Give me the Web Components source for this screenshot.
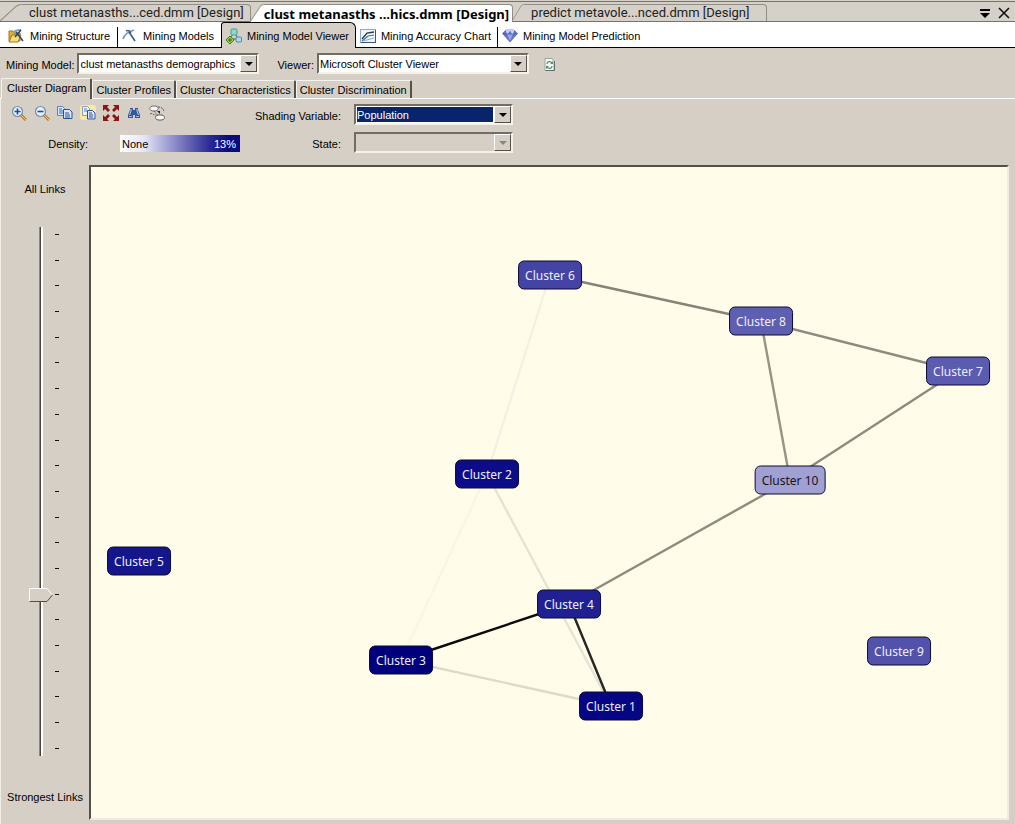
<!DOCTYPE html>
<html lang="en">
<head>
<meta charset="utf-8">
<title>clust metanasths demographics.dmm [Design]</title>
<style>
  html, body { margin: 0; height: 100%; }
  body {
    font: 11px/14px Tahoma, "Liberation Sans", sans-serif;
    color: #000;
    background: #d6cfc6;
  }
</style>
</head>
<body>
<mining-designer></mining-designer>

<script>
function define(name, html, setup) {
  const template = document.createElement('template');
  template.innerHTML = html;
  customElements.define(name, class extends HTMLElement {
    connectedCallback() {
      if (this.shadowRoot) return;
      const content = template.content.cloneNode(true);
      if (setup) setup.call(this, content);
      this.attachShadow({ mode: 'open' }).append(content);
    }
  });
}

/* ---------- icons ---------- */
const GLYPHS = {
  structure: '<path d="M1 3h4l1 2h6v8H1z" fill="#dfae38" stroke="#a07818"/><path d="M1 14 4 7h9l-3 7z" fill="#f8dc74" stroke="#a07818"/><path d="M5 4C8 2 11 2 13 2" stroke="#7da3c4" stroke-width="2"/><path d="M8 4 15 13M13 2 7 9" stroke="#2f4a68" stroke-width="1.6"/>',
  pick: '<path d="M1 11C2 8 5 4 12 2" stroke="#6f9cc8" stroke-width="1.6"/><path d="M4 3C6 2 8 3 9 5" stroke="#4c5c70" stroke-width="1.4"/><path d="M7 4 13 13" stroke="#3c5a84" stroke-width="1.6"/>',
  viewer: '<path d="M8 5 4 10M9 5l3 6M4 11h8" stroke="#3a6a78" fill="none"/><rect x="5" y="1" width="6" height="6" rx="1" fill="#8fd8cc" stroke="#4a9a96"/><rect x="10" y="9" width="5.5" height="5" rx="1" fill="#a9dbe8" stroke="#4a8aa8"/><path d="M4 8 8 12 4 16 0 12z" fill="#a8d648" stroke="#3b7a1c"/><path d="M4 10v4M2 12h4" stroke="#2c6414"/>',
  chart: '<rect x=".5" y="1.5" width="15" height="13" fill="#eef5fc" stroke="#8fa9c8"/><path d="M15.5 2v12.5H1" stroke="#38557e" fill="none"/><path d="M2 11 7 5 14 4" fill="none" stroke="#26334a" stroke-width="1.3"/><path d="M2 13 8 8 14 7" fill="none" stroke="#3f7a8d" stroke-width="1.2"/><path d="M3 13 14 10" stroke="#8fa7c4"/>',
  gem: '<path d="M4 2h8l3.500 3.500L8 14 .5 5.500z" fill="#6474c8" stroke="#5560b0" stroke-width=".7"/><path d="M4 2 5.5 6 8 2l2.5 4L12 2" fill="#c5d0f6" stroke="#e4e9ff" stroke-width=".6"/><path d="M5 6h6l-3 7z" fill="#97a6ea"/><path d="M1 6h14" stroke="#3f4f9c" stroke-width=".6"/>',
  refresh: '<path d="M3 2.5h7l2 3v9H3z" fill="#f3f8f2" stroke="#9aa69e"/><path d="M12.5 5v9.500H4" fill="none" stroke="#5c6f68"/><path d="M5 8c0-3 4-3 5-1M10 10c0 3-4 3-5 1" fill="none" stroke="#5c8a74" stroke-width="1.1"/><path d="M8 8h3V5zM7 10H4v3z" fill="#5c8a74"/>',
  zoomin: '<path d="m10 10 5 5" stroke="#b77d2c" stroke-width="3"/><path d="m10 10 5 5" stroke="#f2cc7c"/><circle cx="6.5" cy="6.5" r="5" fill="#e3f1fd" stroke="#7c8ba6" stroke-width="1.2"/><path d="M6.5 3.5v6M3.5 6.5h6" stroke="#1c4d9c" stroke-width="1.6"/>',
  zoomout: '<path d="m10 10 5 5" stroke="#b77d2c" stroke-width="3"/><path d="m10 10 5 5" stroke="#f2cc7c"/><circle cx="6.5" cy="6.5" r="5" fill="#e3f1fd" stroke="#7c8ba6" stroke-width="1.2"/><path d="M3.5 6.5h6" stroke="#1c4d9c" stroke-width="1.6"/>',
  copy: '<path d="M.5 1.5h5l2 2v7h-7z" fill="#dce8fa" stroke="#5c80bc"/><path d="M2 4h3M2 6h4M2 8h4" stroke="#3c62a8"/><path d="M6.5 4.5h6l2.500 2.500v6.500h-8.500z" fill="#dce8fa" stroke="#28509c"/><path d="M8 8h4M8 10h5M8 12h5" stroke="#28509c"/>',
  copyall: '<rect width="16" height="15" rx="3" fill="#f8e9a4"/><path d="M2.5 1.5h5l2 2v7h-7z" fill="#eef3fa" stroke="#8ca0bc"/><path d="M4 4h3M4 6h4" stroke="#5c7cb4"/><path d="M7.5 5.5h5l2.500 2.500v6h-7.500z" fill="#dce8fa" stroke="#28509c"/><path d="M9 8h3M9 10h4M9 12h4" stroke="#28509c"/>',
  fit: '<path d="M0 0h6L4 2l3 3-2 2-3-3-2 2zM16 0v6l-2-2-3 3-2-2 3-3-2-2zM0 16v-6l2 2 3-3 2 2-3 3 2 2zM16 16h-6l2-2-3-3 2-2 3 3 2-2z" fill="#8c1414"/>',
  find: '<path d="M4 3h3v2h2V3h3v2l2 5v3H9v-3H7v3H2v-3l2-5z" fill="#34589c"/><path d="M5 4v2L3.5 10M11 4v2l1.5 4" stroke="#b8d0f4" fill="none"/><path d="M3 11.500h3M10 11.500h3" stroke="#9cbcec"/>',
  links: '<path d="M1 9c2-2 4 2 6 1M9 2c3 0 5 1 6 4M5 6l5 6" fill="none" stroke="#5c5c5c" stroke-dasharray="2 1"/><ellipse cx="5" cy="3.5" rx="4.2" ry="2.5" fill="#f7f7f7" stroke="#6f6f6f"/><ellipse cx="11" cy="12.5" rx="4.5" ry="2.6" fill="#f7f7f7" stroke="#5a5a5a"/><path d="M8 6h3v3z" fill="#222"/>',
  menu: '<path d="M3 4h10v2H3zM3 8h10l-5 5z" fill="#000"/>',
  close: '<path d="m3 3 10 10M13 3 3 13" stroke="#111" stroke-width="1.6"/>'
};
define('ui-icon', '<style>:host{display:block;width:16px;height:16px;flex:none}svg{display:block}</style><svg width="16" height="16" viewBox="0 0 16 16" fill="none" aria-hidden="true"></svg>',
  function (root) { root.querySelector('svg').innerHTML = GLYPHS[this.getAttribute('name')]; });

define('icon-button', `<style>
  :host{display:block}
  button{display:flex;align-items:center;justify-content:center;width:23px;height:20px;padding:0;border:0;background:none}
  </style><button type="button"><ui-icon></ui-icon></button>`,
  function (root) {
    root.querySelector('button').setAttribute('aria-label', this.getAttribute('label'));
    root.querySelector('ui-icon').setAttribute('name', this.getAttribute('icon'));
  });

/* ---------- document tabs ---------- */
define('document-tab', `<style>
  :host{display:block;position:relative;height:17px;margin-right:-1px}
  button{position:relative;display:block;height:17px;padding:0 var(--end,6px) 0 7px;border:1px solid #918c84;border-width:1px 1px 0 0;border-radius:0 4px 0 0;background:#d5d0c8;
    font:13px/16px Tahoma,Roboto,"DejaVu Sans Condensed",sans-serif;color:#222;white-space:nowrap;margin-left:var(--slant)}
  svg{position:absolute;left:0;top:0;width:var(--slant);height:17px}
  path{fill:#d5d0c8;stroke:#918c84}
  :host([selected]){z-index:1}
  :host([selected]) button{background:#fff;color:#000;font:bold 13px/16px Tahoma,"Noto Sans",sans-serif;height:18px;padding:0 3px 0 0}
  :host([selected]) path{fill:#fff}
  :host([selected]) svg{height:18px}
  </style><svg viewBox="0 0 20 17" preserveAspectRatio="none" aria-hidden="true"><path d="M0 17 15 2Q17 .5 20 .5V18" stroke-dasharray="26 60"/></svg><button type="button"><slot></slot></button>`);

/* ---------- designer view tabs ---------- */
define('view-tab', `<style>
  :host{display:block;height:26px}
  button{box-sizing:border-box;display:flex;align-items:center;gap:5px;height:26px;padding:2px 7px 0 4px;border:0;background:none;font:inherit;color:inherit;white-space:nowrap}
  :host([first]) button{padding:2px 8px 0 8px;gap:6px}
  :host([divider]){background:linear-gradient(#000,#000) right 5px/1px 20px no-repeat}
  :host([selected]) button{border:1px solid #000;border-bottom:0;border-radius:3px 6px 0 0;background:#d6cfc6;padding:1px 6px 0 4px}
  </style><button type="button"><ui-icon></ui-icon><span><slot></slot></span></button>`,
  function (root) { root.querySelector('ui-icon').setAttribute('name', this.getAttribute('icon')); });

/* ---------- page tabs ---------- */
define('page-tab', `<style>
  :host{display:block}
  button{box-sizing:border-box;height:18px;padding:0 3px;border:1px solid;border-width:1px 2px 0 1px;border-color:#f6f3ec #55514a #d6cfc6 #f6f3ec;border-radius:2px 2px 0 0;background:#d6cfc6;font:inherit;color:inherit;white-space:nowrap}
  :host([selected]) button{height:21px;padding:0 4px 3px 5px;margin-bottom:-1px}
  </style><button type="button"><slot></slot></button>`);

/* ---------- labelled drop-down ---------- */
define('select-field', `<style>
  :host{display:flex;align-items:center;gap:var(--gap,3px)}
  label{flex:var(--label,none);padding-top:2px;text-align:right;white-space:nowrap}
  .box{position:relative;box-sizing:border-box;width:var(--box);height:21px;padding:1px;border:2px solid;border-color:#716d65 #f5f2ea #f5f2ea #716d65;background:#fff}
  select{appearance:none;display:block;box-sizing:border-box;width:calc(100% - 17px);height:15px;margin:0;padding:0;border:0;border-radius:0;outline:0;background:#fff;color:#000;font:inherit;opacity:1}
  i{position:absolute;right:0;top:0;box-sizing:border-box;width:17px;height:17px;border:1px solid;border-color:#fff #55514a #55514a #fff;background:#d6cfc6;pointer-events:none;display:flex;align-items:center;justify-content:center}
  i::after{content:"";border:4px solid transparent;border-bottom:0;border-top-color:#000}
  :host([active]) select{background:#08246b;color:#fff}
  :host([off]) .box,:host([off]) select{background:#d6cfc6}
  :host([off]) i::after{border-top-color:#8b877f}
  </style><label for="s"></label><span class="box"><select id="s"></select><i></i></span>`,
  function (root) {
    root.querySelector('label').textContent = this.getAttribute('label');
    const s = root.querySelector('select');
    if (this.hasAttribute('value')) s.add(new Option(this.getAttribute('value')));
    s.disabled = this.hasAttribute('off');
  });

/* ---------- density legend ---------- */
define('density-legend', `<style>
  :host{display:flex;align-items:center}
  .name{width:88px;text-align:right}
  .bar{display:flex;justify-content:space-between;box-sizing:border-box;width:120px;height:17px;margin-left:32px;padding:2px 4px 0 2px;
    background:linear-gradient(90deg,#fff 0,#e6e6f4 20%,#b0b0dc 35%,#6c6cb8 55%,#2a2a94 75%,#0a0a80 90%)}
  .bar span:last-child{color:#fff}
  </style><span class="name">Density:</span><span class="bar"><span>None</span><span>13%</span></span>`);

/* ---------- link strength slider ---------- */
const THUMB = "url(\"data:image/svg+xml,%3Csvg xmlns='http://www.w3.org/2000/svg' width='24' height='14'%3E%3Cpath d='M.5 .5H18L23.500 7 18 13.500H.5z' fill='%23d6cfc6'/%3E%3Cpath d='M.5 13V.5H18L23 6.500' fill='none' stroke='%23fff'/%3E%3Cpath d='M.5 13.500H18L23.500 7' fill='none' stroke='%2355514a'/%3E%3C/svg%3E\")";
define('link-slider', `<style>
  :host{display:flex;flex-direction:column;align-items:center;box-sizing:border-box;width:88px;padding:17px 0 16px 0}
  .scale{flex:1;contain:size;display:flex;gap:2px;width:30px;min-height:200px;margin:31px 0 34px 28px;align-self:flex-start}
  input{appearance:none;writing-mode:vertical-lr;width:24px;height:auto;align-self:stretch;margin:0;flex:none;outline:0;
    background:linear-gradient(90deg,#8b877f 1px,#45423c 1px 2px,#fff 2px 4px) center/4px 100% no-repeat}
  input::-webkit-slider-thumb{appearance:none;width:24px;height:14px;background:${THUMB} no-repeat}
  .ticks{flex:none;display:flex;flex-direction:column;justify-content:space-between;padding:7px 0}
  .ticks b{width:4px;height:1px;background:#111}
  </style><label for="r">All Links</label>
  <div class="scale"><input id="r" type="range" min="0" max="20" value="14"><div class="ticks"></div></div>
  <label for="r">Strongest Links</label>`,
  function (root) { root.querySelector('.ticks').innerHTML = '<b></b>'.repeat(21); });

/* ---------- cluster diagram ---------- */
define('cluster-node', `<style>
  :host{display:block;position:absolute;transform:translate(-50%,-50%)}
  button{box-sizing:border-box;height:29px;padding:0 6px;border:1px solid #0b0b30;border-radius:6px;background:var(--fill);color:var(--ink,#eeeefa);
    font:12px/16px "Noto Sans",sans-serif;white-space:nowrap}
  </style><button type="button"><slot></slot></button>`,
  function () {
    this.style.left = this.getAttribute('x') + 'px';
    this.style.top = this.getAttribute('y') + 'px';
    this.style.setProperty('--fill', this.getAttribute('fill'));
  });

define('cluster-map', `<style>
  :host{display:block;position:relative;overflow:hidden;border:2px solid;border-color:#55514a #efebe2 #efebe2 #55514a;background:#fffcea}
  svg{position:absolute;left:0;top:0;width:100%;height:100%}
  </style><svg aria-hidden="true"></svg><slot></slot>`,
  function (root) {
    const links = [['6','2','#f3f1e3'],['2','3','#f8f6e7'],['2','1','#e5e3d4'],['3','1','#dcdacb'],
      ['6','8','#858477'],['8','7','#8c8b7e'],['8','10','#959486'],['7','10','#8c8b7e'],['10','4','#8c8b7e'],
      ['4','3','#0a0a08'],['4','1','#262622']];
    const at = id => { const n = this.querySelector('#c' + id); return [n.getAttribute('x'), n.getAttribute('y')]; };
    root.querySelector('svg').innerHTML = links.map(([a, b, c]) => {
      const [x1, y1] = at(a), [x2, y2] = at(b);
      return `<line x1="${x1}" y1="${y1}" x2="${x2}" y2="${y2}" stroke="${c}" stroke-width="2.4"/>`;
    }).join('');
  });

/* ---------- whole designer ---------- */
define('mining-designer', `<style>
  :host{display:flex;flex-direction:column;height:100vh;min-height:500px}
  .docs{display:flex;box-sizing:border-box;height:22px;padding-top:4px;background:linear-gradient(#77736b,#77736b) 0 1px/100% 1px no-repeat,linear-gradient(#77736b,#77736b) 0 21px/100% 1px no-repeat,#d5d0c8}
  .docs .tools{display:flex;margin:-1px 0 0 auto}
  .docs icon-button{margin-right:-4px}
  .docs .tools{padding-right:4px}
  .views{display:flex;height:25px;padding-bottom:1px;background:linear-gradient(#000,#000) bottom/100% 1px no-repeat,#fff}
  .source{display:flex;align-items:center;height:31px;padding-left:6px}
  .source select-field + select-field{margin-left:18px}
  .source icon-button{margin-left:10px}
  .pages{display:flex;align-items:flex-end;height:19px;padding-left:1px;border-bottom:1px solid #fff}
  main{flex:1;display:flex;flex-direction:column;border-left:1px solid #f0ede5;padding:0 6px 4px 0}
  .head{display:flex;height:66px}
  .left{width:250px;padding:4px 0 0 6px;box-sizing:border-box}
  .bar{display:flex}
  .left density-legend{margin:12px 0 0 -7px}
  .right{display:flex;flex-direction:column;gap:7px;padding-top:5px}
  .work{flex:1;display:flex}
  cluster-map{flex:1}
  </style>
  <nav class="docs">
    <document-tab style="--slant:22px">clust metanasths...ced.dmm [Design]</document-tab>
    <document-tab selected style="--slant:14px">clust metanasths ...hics.dmm [Design]</document-tab>
    <document-tab style="--slant:12px;--end:16px">predict metavole...nced.dmm [Design]</document-tab>
    <div class="tools"><icon-button icon="menu" label="Window list"></icon-button><icon-button icon="close" label="Close"></icon-button></div>
  </nav>
  <nav class="views">
    <view-tab first divider icon="structure">Mining Structure</view-tab>
    <view-tab icon="pick">Mining Models</view-tab>
    <view-tab selected icon="viewer">Mining Model Viewer</view-tab>
    <view-tab divider icon="chart">Mining Accuracy Chart</view-tab>
    <view-tab icon="gem">Mining Model Prediction</view-tab>
  </nav>
  <div class="source">
    <select-field label="Mining Model:" value="clust metanasths demographics" style="--box:182px"></select-field>
    <select-field label="Viewer:" value="Microsoft Cluster Viewer" style="--box:212px"></select-field>
    <icon-button icon="refresh" label="Refresh"></icon-button>
  </div>
  <nav class="pages">
    <page-tab selected>Cluster Diagram</page-tab>
    <page-tab>Cluster Profiles</page-tab>
    <page-tab>Cluster Characteristics</page-tab>
    <page-tab>Cluster Discrimination</page-tab>
  </nav>
  <main>
    <div class="head">
      <div class="left">
        <div class="bar">
          <icon-button icon="zoomin" label="Zoom in"></icon-button>
          <icon-button icon="zoomout" label="Zoom out"></icon-button>
          <icon-button icon="copy" label="Copy view"></icon-button>
          <icon-button icon="copyall" label="Copy diagram"></icon-button>
          <icon-button icon="fit" label="Fit to window"></icon-button>
          <icon-button icon="find" label="Find node"></icon-button>
          <icon-button icon="links" label="Improve layout"></icon-button>
        </div>
        <density-legend></density-legend>
      </div>
      <div class="right">
        <select-field active label="Shading Variable:" value="Population" style="--label:0 0 90px;--gap:13px;--box:159px"></select-field>
        <select-field off label="State:" style="--label:0 0 90px;--gap:13px;--box:159px"></select-field>
      </div>
    </div>
    <div class="work">
      <link-slider></link-slider>
      <cluster-map>
        <cluster-node id="c6" x="459" y="108" fill="#4444a4">Cluster 6</cluster-node>
        <cluster-node id="c8" x="670" y="154" fill="#5f5fb2">Cluster 8</cluster-node>
        <cluster-node id="c7" x="867" y="204" fill="#5b5bb0">Cluster 7</cluster-node>
        <cluster-node id="c2" x="396" y="307" fill="#0c0c88">Cluster 2</cluster-node>
        <cluster-node id="c10" x="699" y="313" fill="#a0a0d2" style="--ink:#15151c">Cluster 10</cluster-node>
        <cluster-node id="c5" x="48" y="394" fill="#15158c">Cluster 5</cluster-node>
        <cluster-node id="c4" x="478" y="437" fill="#202092">Cluster 4</cluster-node>
        <cluster-node id="c3" x="310" y="493" fill="#00007c">Cluster 3</cluster-node>
        <cluster-node id="c9" x="808" y="484" fill="#5252aa">Cluster 9</cluster-node>
        <cluster-node id="c1" x="520" y="539" fill="#060684">Cluster 1</cluster-node>
      </cluster-map>
    </div>
  </main>`);
</script>
</body>
</html>
